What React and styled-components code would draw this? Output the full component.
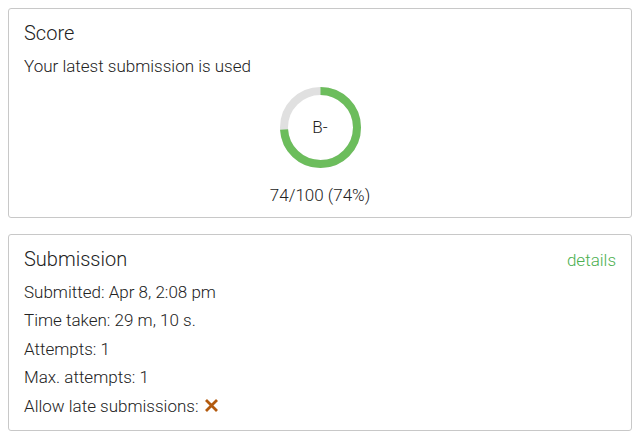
import React from 'react';
import styled, { createGlobalStyle } from 'styled-components';

const GlobalStyle = createGlobalStyle`
  body {
    margin: 0;
    background: #fff;
    font-family: Roboto, "Liberation Sans", sans-serif;
    font-weight: 300;
    color: #222;
  }
`;

const Page = styled.div`
  display: flex;
  flex-direction: column;
  gap: 16px;
  padding: 8px 8px 0 8px;
  width: 624px;
`;

const Card = styled.div`
  border: 1px solid #c8c8c8;
  border-radius: 3px;
  padding: ${props => props.top || 11}px 15px ${props => props.bottom || 12}px 15px;
  display: flex;
  flex-direction: column;
`;

const Header = styled.div`
  display: flex;
  justify-content: space-between;
  align-items: baseline;
  margin-bottom: 6px;
`;

const Title = styled.h2`
  margin: 0;
  font-size: 20px;
  font-weight: 300;
  line-height: 26px;
`;

const Link = styled.a`
  color: #4caf50;
  font-size: 17px;
  text-decoration: none;
  cursor: pointer;
`;

const Line = styled.div`
  font-size: 17px;
  line-height: 28.5px;
  display: flex;
  align-items: center;
  gap: 6px;
`;

const Center = styled.div`
  display: flex;
  flex-direction: column;
  align-items: center;
  padding-top: 6px;
`;

const Ring = styled.div`
  position: relative;
  width: 81px;
  height: 81px;
`;

const Grade = styled.span`
  position: absolute;
  inset: 0;
  display: flex;
  align-items: center;
  justify-content: center;
  font-size: 17px;
`;

const ScoreText = styled.div`
  font-size: 17px;
  margin-top: 17px;
  line-height: 20px;
`;

const Donut = ({ pct }) => {
  const r = 36.5;
  const c = 2 * Math.PI * r;
  return (
    <svg width="81" height="81" viewBox="0 0 81 81">
      <circle cx="40.5" cy="40.5" r={r} fill="none" stroke="#e0e0e0" strokeWidth="8" />
      <circle
        cx="40.5"
        cy="40.5"
        r={r}
        fill="none"
        stroke="#6cbd5c"
        strokeWidth="8"
        strokeDasharray={`${(c * pct) / 100} ${c}`}
        transform="rotate(-90 40.5 40.5)"
      />
    </svg>
  );
};

const Cross = () => (
  <svg width="15" height="15" viewBox="0 0 15 15">
    <path d="M2 2 L13 13 M13 2 L2 13" stroke="#b35a0e" strokeWidth="2.8" strokeLinecap="butt" />
  </svg>
);

const App = () => {
  return (
    <Page>
      <GlobalStyle />
      <Card bottom={12}>
        <Header>
          <Title>Score</Title>
        </Header>
        <Line>Your latest submission is used</Line>
        <Center>
          <Ring>
            <Donut pct={74} />
            <Grade>B-</Grade>
          </Ring>
          <ScoreText>74/100 (74%)</ScoreText>
        </Center>
      </Card>
      <Card bottom={10}>
        <Header>
          <Title>Submission</Title>
          <Link>details</Link>
        </Header>
        <Line>Submitted: Apr 8, 2:08 pm</Line>
        <Line>Time taken: 29 m, 10 s.</Line>
        <Line>Attempts: 1</Line>
        <Line>Max. attempts: 1</Line>
        <Line>Allow late submissions: <Cross /></Line>
      </Card>
    </Page>
  );
};

export default App;
